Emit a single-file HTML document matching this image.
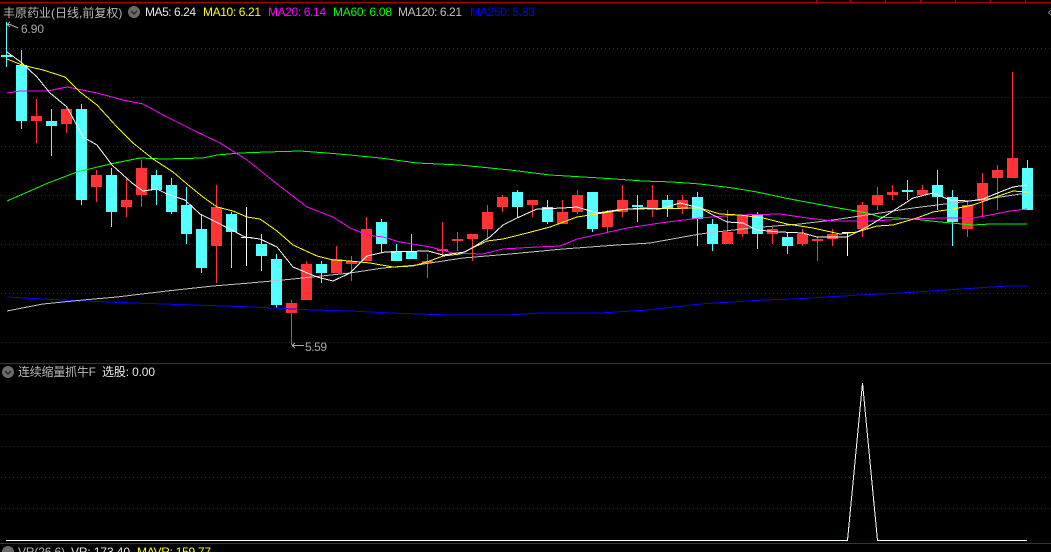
<!DOCTYPE html>
<html>
<head>
<meta charset="utf-8">
<style>
html,body{margin:0;padding:0;background:#000;width:1051px;height:552px;overflow:hidden}
svg{display:block}
text{font-family:"Liberation Sans","WenQuanYi Zen Hei","Noto Sans CJK SC",sans-serif;font-size:12px}
.l{fill:none;stroke-width:1;shape-rendering:crispEdges}
.g{stroke:#a80000;stroke-width:1;stroke-dasharray:1 3;shape-rendering:crispEdges}
</style>
</head>
<body>
<svg width="1051" height="552" viewBox="0 0 1051 552" xmlns="http://www.w3.org/2000/svg">
<rect width="1051" height="552" fill="#000"/>
<!-- frame lines -->
<g shape-rendering="crispEdges" fill="#b00000">
<rect x="0" y="2" width="1051" height="1"/>
<rect x="0" y="363" width="1051" height="1"/>
<rect x="0" y="543" width="1051" height="1"/>
<rect x="816" y="0" width="1" height="2"/>
<rect x="850" y="0" width="1" height="2"/>
<rect x="885" y="0" width="1" height="2"/>
<rect x="920" y="0" width="1" height="2"/>
<rect x="955" y="0" width="1" height="2"/>
<rect x="990" y="0" width="1" height="2"/>
<rect x="1025" y="0" width="1" height="2"/>
</g>
<!-- grid -->
<g class="g">
<line x1="1" x2="1051" y1="48.5" y2="48.5"/>
<line x1="1" x2="1051" y1="97.5" y2="97.5"/>
<line x1="1" x2="1051" y1="146.5" y2="146.5"/>
<line x1="1" x2="1051" y1="195.5" y2="195.5"/>
<line x1="1" x2="1051" y1="244.5" y2="244.5"/>
<line x1="1" x2="1051" y1="293.5" y2="293.5"/>
<line x1="1" x2="1051" y1="342.5" y2="342.5"/>
<line x1="1" x2="1051" y1="414.5" y2="414.5"/>
<line x1="1" x2="1051" y1="446.5" y2="446.5"/>
<line x1="1" x2="1051" y1="477.5" y2="477.5"/>
<line x1="1" x2="1051" y1="508.5" y2="508.5"/>
</g>
<!-- cyan wicks -->
<path class="l" stroke="#54ffff" d="M6.5 22V67M21.5 50V129M51.5 109V156M81.5 104V205M111.5 168V227M156.5 170V205M171.5 178V214M186.5 187V244M201.5 214V273M231.5 212V268M261.5 234V271M276.5 254V308M321.5 261V283M381.5 219V253M396.5 244V261M411.5 234V259M517.5 190V218M547.5 200V224M592.5 192V232M637.5 195V222M667.5 195V217M697.5 192V246M712.5 219V251M757.5 212V249M787.5 232V254M907.5 180V200M937.5 170V210M952.5 190V246M1027.5 160V210"/>
<!-- red wicks -->
<path class="l" stroke="#ff3333" d="M36.5 99V143M66.5 107V133M96.5 170V202M126.5 179V217M141.5 160V207M216.5 185V283M291.5 300V345M306.5 261V300M336.5 246V273M351.5 256V281M366.5 217V261M427.5 254V278M442.5 222V257M457.5 232V251M472.5 234V261M487.5 205V240M502.5 195V212M532.5 200V217M562.5 200V224M577.5 190V214M607.5 210V233M622.5 185V217M652.5 185V217M682.5 195V214M727.5 210V244M742.5 215V237M772.5 227V244M802.5 229V246M817.5 237V261M832.5 229V246M862.5 202V237M877.5 187V210M892.5 185V200M922.5 185V195M967.5 202V237M982.5 173V217M997.5 165V210M1012.5 72V178"/>
<!-- white doji -->
<path class="l" stroke="#fff" d="M246.5 207V266M847.5 232V256"/>
<g shape-rendering="crispEdges" fill="#fff">
<rect x="241" y="237" width="11" height="1"/>
<rect x="842" y="232" width="11" height="1"/>
</g>
<!-- cyan bodies -->
<g shape-rendering="crispEdges" fill="#54ffff">
<rect x="1" y="55" width="11" height="2"/>
<rect x="16" y="65" width="11" height="56"/>
<rect x="46" y="121" width="11" height="5"/>
<rect x="76" y="109" width="11" height="91"/>
<rect x="106" y="175" width="11" height="37"/>
<rect x="151" y="175" width="11" height="15"/>
<rect x="166" y="185" width="11" height="27"/>
<rect x="181" y="205" width="11" height="29"/>
<rect x="196" y="229" width="11" height="39"/>
<rect x="226" y="214" width="11" height="18"/>
<rect x="256" y="244" width="11" height="12"/>
<rect x="271" y="259" width="11" height="46"/>
<rect x="316" y="264" width="11" height="9"/>
<rect x="376" y="222" width="11" height="22"/>
<rect x="391" y="251" width="11" height="10"/>
<rect x="406" y="252" width="11" height="7"/>
<rect x="512" y="192" width="11" height="15"/>
<rect x="542" y="207" width="11" height="15"/>
<rect x="587" y="192" width="11" height="37"/>
<rect x="632" y="205" width="11" height="2"/>
<rect x="662" y="200" width="11" height="9"/>
<rect x="692" y="197" width="11" height="22"/>
<rect x="707" y="224" width="11" height="20"/>
<rect x="752" y="215" width="11" height="19"/>
<rect x="782" y="237" width="11" height="9"/>
<rect x="902" y="190" width="11" height="2"/>
<rect x="932" y="185" width="11" height="12"/>
<rect x="947" y="197" width="11" height="25"/>
<rect x="1022" y="168" width="11" height="42"/>
</g>
<!-- red bodies -->
<g shape-rendering="crispEdges" fill="#ff3333">
<rect x="31" y="116" width="11" height="5"/>
<rect x="61" y="109" width="11" height="15"/>
<rect x="91" y="175" width="11" height="12"/>
<rect x="121" y="200" width="11" height="7"/>
<rect x="136" y="168" width="11" height="27"/>
<rect x="211" y="207" width="11" height="39"/>
<rect x="286" y="303" width="11" height="10"/>
<rect x="301" y="264" width="11" height="36"/>
<rect x="331" y="259" width="11" height="14"/>
<rect x="346" y="261" width="11" height="3"/>
<rect x="361" y="229" width="11" height="32"/>
<rect x="422" y="261" width="11" height="2"/>
<rect x="437" y="249" width="11" height="2"/>
<rect x="452" y="239" width="11" height="2"/>
<rect x="467" y="234" width="11" height="5"/>
<rect x="482" y="212" width="11" height="17"/>
<rect x="497" y="197" width="11" height="10"/>
<rect x="527" y="200" width="11" height="5"/>
<rect x="557" y="212" width="11" height="12"/>
<rect x="572" y="195" width="11" height="17"/>
<rect x="602" y="212" width="11" height="15"/>
<rect x="617" y="200" width="11" height="12"/>
<rect x="647" y="200" width="11" height="10"/>
<rect x="677" y="200" width="11" height="9"/>
<rect x="722" y="232" width="11" height="12"/>
<rect x="737" y="215" width="11" height="19"/>
<rect x="767" y="229" width="11" height="5"/>
<rect x="797" y="234" width="11" height="10"/>
<rect x="812" y="239" width="11" height="2"/>
<rect x="827" y="234" width="11" height="5"/>
<rect x="857" y="205" width="11" height="24"/>
<rect x="872" y="195" width="11" height="10"/>
<rect x="887" y="192" width="11" height="3"/>
<rect x="917" y="190" width="11" height="5"/>
<rect x="962" y="205" width="11" height="24"/>
<rect x="977" y="183" width="11" height="18"/>
<rect x="992" y="170" width="11" height="8"/>
<rect x="1007" y="158" width="11" height="20"/>
</g>
<!-- moving averages -->
<polyline class="l" stroke="#0000ff" points="7,297 43,299 83,301 133,303 193,305 253,307 313,310 350,311 390,313 450,315 507,315 540,313 600,313 647,310 700,304 763,300 793,299 860,295 900,293 977,288 1007,286 1027,286"/>
<polyline class="l" stroke="#00ff00" points="7,201 48,183 77,172 110,164 140,158 163,159 203,158 217,155 240,153 267,152 300,151 327,153 350,155 380,158 417,163 460,165 510,170 550,175 600,178 643,181 673,182 700,184 733,188 757,192 790,199 833,207 867,213 880,217 913,219 940,222 973,225 990,224 1027,224"/>
<polyline class="l" stroke="#c0c0c0" points="7,311 43,304 83,300 117,297 167,291 213,286 250,283 293,279 350,273 383,268 417,265 463,258 510,254 563,249 617,245 650,243 700,234 750,228 800,224 833,220 880,213 913,208 953,203 987,199 1027,193"/>
<polyline class="l" stroke="#ff00ff" points="7,93 20,91 47,91 67,87 97,93 123,100 143,104 167,117 193,130 220,143 247,160 277,184 307,207 333,217 350,228 367,235 383,237 400,242 430,247 453,253 483,254 503,249 537,247 560,246 577,239 600,234 627,228 660,223 700,218 737,215 780,214 807,218 833,221 873,221 903,219 947,218 973,218 990,215 1010,211 1027,209"/>
<polyline class="l" stroke="#ffff00" points="7,59 22,65 43,70 65,77 80,92 97,105 117,127 133,143 153,159 173,172 187,184 203,197 217,207 233,211 247,217 260,219 277,231 293,245 317,256 333,260 350,261 370,263 393,267 413,266 427,262 443,256 460,254 487,241 503,239 527,233 550,227 577,217 603,213 627,209 700,208 720,214 740,215 763,218 787,224 813,228 840,234 857,232 877,226 893,225 917,218 933,212 953,209 973,205 993,198 1013,191 1027,192"/>
<polyline class="l" stroke="#ffffff" points="7,52 22,63 37,77 50,93 67,107 83,137 97,145 112,165 132,183 143,191 157,189 167,194 185,200 200,214 220,224 245,237 260,239 277,247 293,267 317,277 333,281 350,273 367,256 385,252 428,251 443,255 465,252 490,237 503,225 517,218 537,209 563,208 577,207 597,213 617,210 643,208 660,209 680,203 700,208 713,215 727,222 743,223 757,230 780,232 803,233 817,237 847,237 867,227 890,213 913,198 933,193 950,200 970,201 983,199 1000,192 1013,187 1027,185"/>
<!-- indicator line -->
<path class="l" stroke="#ffffff" d="M6 540.5H847.5L862.5 383L877.5 540.5H1027"/>
<!-- high/low markers -->
<path fill="none" stroke="#b0b0b0" d="M7 24.5L10 24.5L18 28M7 24.5L10 22M7 24.5L10 27"/>
<path fill="none" stroke="#b0b0b0" d="M292 345.5H304M292 345.5L295 343M292 345.5L295 348"/>
<text x="21" y="33" fill="#a8a8a8" textLength="23">6.90</text>
<text x="305" y="351" fill="#a8a8a8" textLength="22">5.59</text>
<!-- header -->
<text x="3" y="17" fill="#b8b8b8" font-size="12">丰原药业(日线,前复权)</text>
<circle cx="134" cy="12" r="6" fill="#6a6a6a"/>
<path fill="none" stroke="#222" stroke-width="1.3" d="M131 11L134 14L137 11"/>
<text x="145" y="16" fill="#e8e8e8" textLength="51">MA5: 6.24</text>
<text x="203" y="16" fill="#ffff00" textLength="58">MA10: 6.21</text>
<text x="268" y="16" fill="#ff00ff" textLength="58">MA20: 6.14</text>
<text x="333" y="16" fill="#00ff00" textLength="59">MA60: 6.08</text>
<text x="398" y="16" fill="#c0c0c0" textLength="64">MA120: 6.21</text>
<text x="470" y="16" fill="#0000ff" textLength="65">MA250: 5.83</text>
<path fill="none" stroke="#808080" d="M1051 10L1048.500 12.500L1051 15"/>
<!-- sub panel 1 -->
<circle cx="8" cy="372" r="6" fill="#6a6a6a"/>
<path fill="none" stroke="#222" stroke-width="1.3" d="M5 371L8 374L11 371"/>
<text x="18" y="376" fill="#b8b8b8" textLength="78">连续缩量抓牛F</text>
<text x="102" y="376" fill="#e8e8e8" textLength="53">选股: 0.00</text>
<!-- sub panel 2 -->
<circle cx="8" cy="552" r="6" fill="#6a6a6a"/>
<text x="18" y="556" fill="#b8b8b8" textLength="47">VR(26,6)</text>
<text x="71" y="556" fill="#e8e8e8" textLength="59">VR: 173.40</text>
<text x="137" y="556" fill="#ffff00" textLength="74">MAVR: 159.77</text>
</svg>
</body>
</html>
